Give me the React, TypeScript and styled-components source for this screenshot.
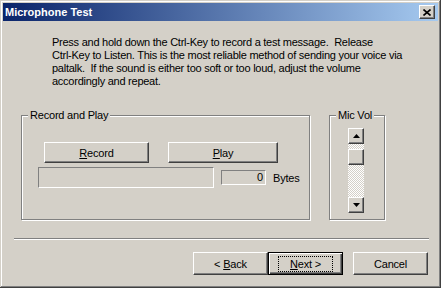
import React from "react";
import styled, { createGlobalStyle } from "styled-components";

const Colors = {
    FACE: "#d4d0c8",
    SHADOW: "#808080",
    DARK: "#404040",
    LIGHT: "#ffffff",
};

const GlobalStyle = createGlobalStyle`
    html, body {
        margin: 0;
        padding: 0;
        background: ${Colors.FACE};
    }
    body {
        font-family: "Liberation Sans", Arial, sans-serif;
        font-size: 11px;
        letter-spacing: -0.2px;
        color: #000;
    }
`;

const Window = styled.div`
    width: 441px;
    height: 288px;
    box-sizing: border-box;
    padding: 3px;
    background: ${Colors.FACE};
    display: flex;
    flex-direction: column;
    box-shadow: inset -1px -1px 0 ${Colors.DARK}, inset 1px 1px 0 ${Colors.FACE},
        inset -2px -2px 0 ${Colors.SHADOW}, inset 2px 2px 0 ${Colors.LIGHT};
`;

const TitleBar = styled.div`
    height: 18px;
    display: flex;
    align-items: center;
    justify-content: space-between;
    padding: 0 3px 0 2px;
    background: linear-gradient(to right, #0a246a, #a6caf0);
`;

const Title = styled.span`
    color: #fff;
    font-weight: bold;
    font-size: 11px;
    letter-spacing: 0;
`;

const CloseButton = styled.div`
    width: 16px;
    height: 14px;
    box-sizing: border-box;
    display: flex;
    align-items: center;
    justify-content: center;
    background: ${Colors.FACE};
    border: 1px solid;
    border-color: ${Colors.LIGHT} ${Colors.DARK} ${Colors.DARK} ${Colors.LIGHT};
    box-shadow: inset -1px -1px 0 ${Colors.SHADOW};
`;

const Message = styled.p`
    margin: 15px 0 0 49px;
    line-height: 13px;
    white-space: nowrap;
    letter-spacing: -0.25px;
`;

const GroupsRow = styled.div`
    display: flex;
    align-items: flex-start;
    gap: 19px;
    margin: 21px 0 0 18px;
`;

const GroupBox = styled.fieldset<{ $width: number; $height: number }>`
    margin: 0;
    padding: 0;
    min-inline-size: 0;
    width: ${p => p.$width}px;
    height: ${p => p.$height}px;
    box-sizing: border-box;
    border: 1px solid ${Colors.SHADOW};
    box-shadow: inset 1px 1px 0 ${Colors.LIGHT}, 1px 1px 0 ${Colors.LIGHT};
`;

const Legend = styled.legend`
    margin-left: 6px;
    padding: 0 2px;
    line-height: 13px;
    background: ${Colors.FACE};
`;

const ButtonsLine = styled.div`
    display: flex;
    gap: 19px;
    margin: 20px 0 0 22px;
`;

const Button = styled.div<{ $width: number }>`
    width: ${p => p.$width}px;
    height: 21px;
    box-sizing: border-box;
    display: flex;
    align-items: center;
    justify-content: center;
    background: ${Colors.FACE};
    border: 1px solid;
    border-color: ${Colors.LIGHT} ${Colors.DARK} ${Colors.DARK} ${Colors.LIGHT};
    box-shadow: inset -1px -1px 0 ${Colors.SHADOW};
`;

const StatusLine = styled.div`
    display: flex;
    align-items: center;
    gap: 7px;
    margin: 4px 0 0 16px;
`;

const Field = styled.div<{ $width: number; $height: number }>`
    width: ${p => p.$width}px;
    height: ${p => p.$height}px;
    box-sizing: border-box;
    border: 1px solid;
    border-color: ${Colors.SHADOW} ${Colors.LIGHT} ${Colors.LIGHT} ${Colors.SHADOW};
    display: flex;
    align-items: center;
    justify-content: flex-end;
    padding-right: 2px;
    line-height: 13px;
`;

const ScrollBar = styled.div`
    width: 16px;
    height: 85px;
    margin: 6px 0 0 18px;
    display: flex;
    flex-direction: column;
`;

const ScrollButton = styled(Button)`
    height: 16px;
    flex: none;
`;

const Track = styled.div`
    flex: 1;
    padding-top: 5px;
    background-image: repeating-conic-gradient(${Colors.LIGHT} 0 25%, ${Colors.FACE} 0 50%);
    background-size: 2px 2px;
`;

const Separator = styled.div`
    margin: 18px 0 0 11px;
    width: 415px;
    height: 1px;
    background: ${Colors.SHADOW};
    border-bottom: 1px solid ${Colors.LIGHT};
`;

const Footer = styled.div`
    display: flex;
    justify-content: flex-end;
    padding-right: 10px;
    margin-top: 12px;
`;

const WizardButton = styled(Button)<{ $default?: boolean; $gap?: number }>`
    height: 23px;
    margin-left: ${p => p.$gap || 0}px;
    ${p => p.$default && `
        border: 1px solid #000;
        box-shadow: inset 1px 1px 0 ${Colors.LIGHT}, inset -1px -1px 0 ${Colors.DARK}, inset -2px -2px 0 ${Colors.SHADOW};
    `}
`;

const FocusRect = styled.span`
    border: 1px dotted #000;
    padding: 1px 11px;
    line-height: 12px;
`;

const Arrow = ({ up }: { up?: boolean }) => (
    <svg width="7" height="4" viewBox="0 0 7 4">
        <path d={up ? "M3.5 0 L7 4 L0 4 Z" : "M0 0 L7 0 L3.5 4 Z"} fill="#000" />
    </svg>
);

export default function App() {
    return (
        <>
            <GlobalStyle />
            <Window>
                <TitleBar>
                    <Title>Microphone Test</Title>
                    <CloseButton>
                        <svg width="8" height="7" viewBox="0 0 8 7">
                            <path d="M0.5 0.5 L7.5 6.5 M7.5 0.5 L0.5 6.5" stroke="#000" strokeWidth="1.6" />
                        </svg>
                    </CloseButton>
                </TitleBar>
                <Message>
                    Press and hold down the Ctrl-Key to record a test message.&nbsp; Release<br />
                    Ctrl-Key to Listen. This is the most reliable method of sending your voice via<br />
                    paltalk.&nbsp; If the sound is either too soft or too loud, adjust the volume<br />
                    accordingly and repeat.
                </Message>
                <GroupsRow>
                    <GroupBox $width={289} $height={111}>
                        <Legend>Record and Play</Legend>
                        <ButtonsLine>
                            <Button $width={105}><span><u>R</u>ecord</span></Button>
                            <Button $width={110}><span><u>P</u>lay</span></Button>
                        </ButtonsLine>
                        <StatusLine>
                            <Field $width={176} $height={21} />
                            <Field $width={45} $height={15}>0</Field>
                            <span>Bytes</span>
                        </StatusLine>
                    </GroupBox>
                    <GroupBox $width={56} $height={111}>
                        <Legend>Mic Vol</Legend>
                        <ScrollBar>
                            <ScrollButton $width={16}><Arrow up /></ScrollButton>
                            <Track>
                                <ScrollButton $width={16} />
                            </Track>
                            <ScrollButton $width={16}><Arrow /></ScrollButton>
                        </ScrollBar>
                    </GroupBox>
                </GroupsRow>
                <Separator />
                <Footer>
                    <WizardButton $width={75}><span>&lt; <u>B</u>ack</span></WizardButton>
                    <WizardButton $width={75} $default><FocusRect><u>N</u>ext &gt;</FocusRect></WizardButton>
                    <WizardButton $width={75} $gap={10}>Cancel</WizardButton>
                </Footer>
            </Window>
        </>
    );
}
